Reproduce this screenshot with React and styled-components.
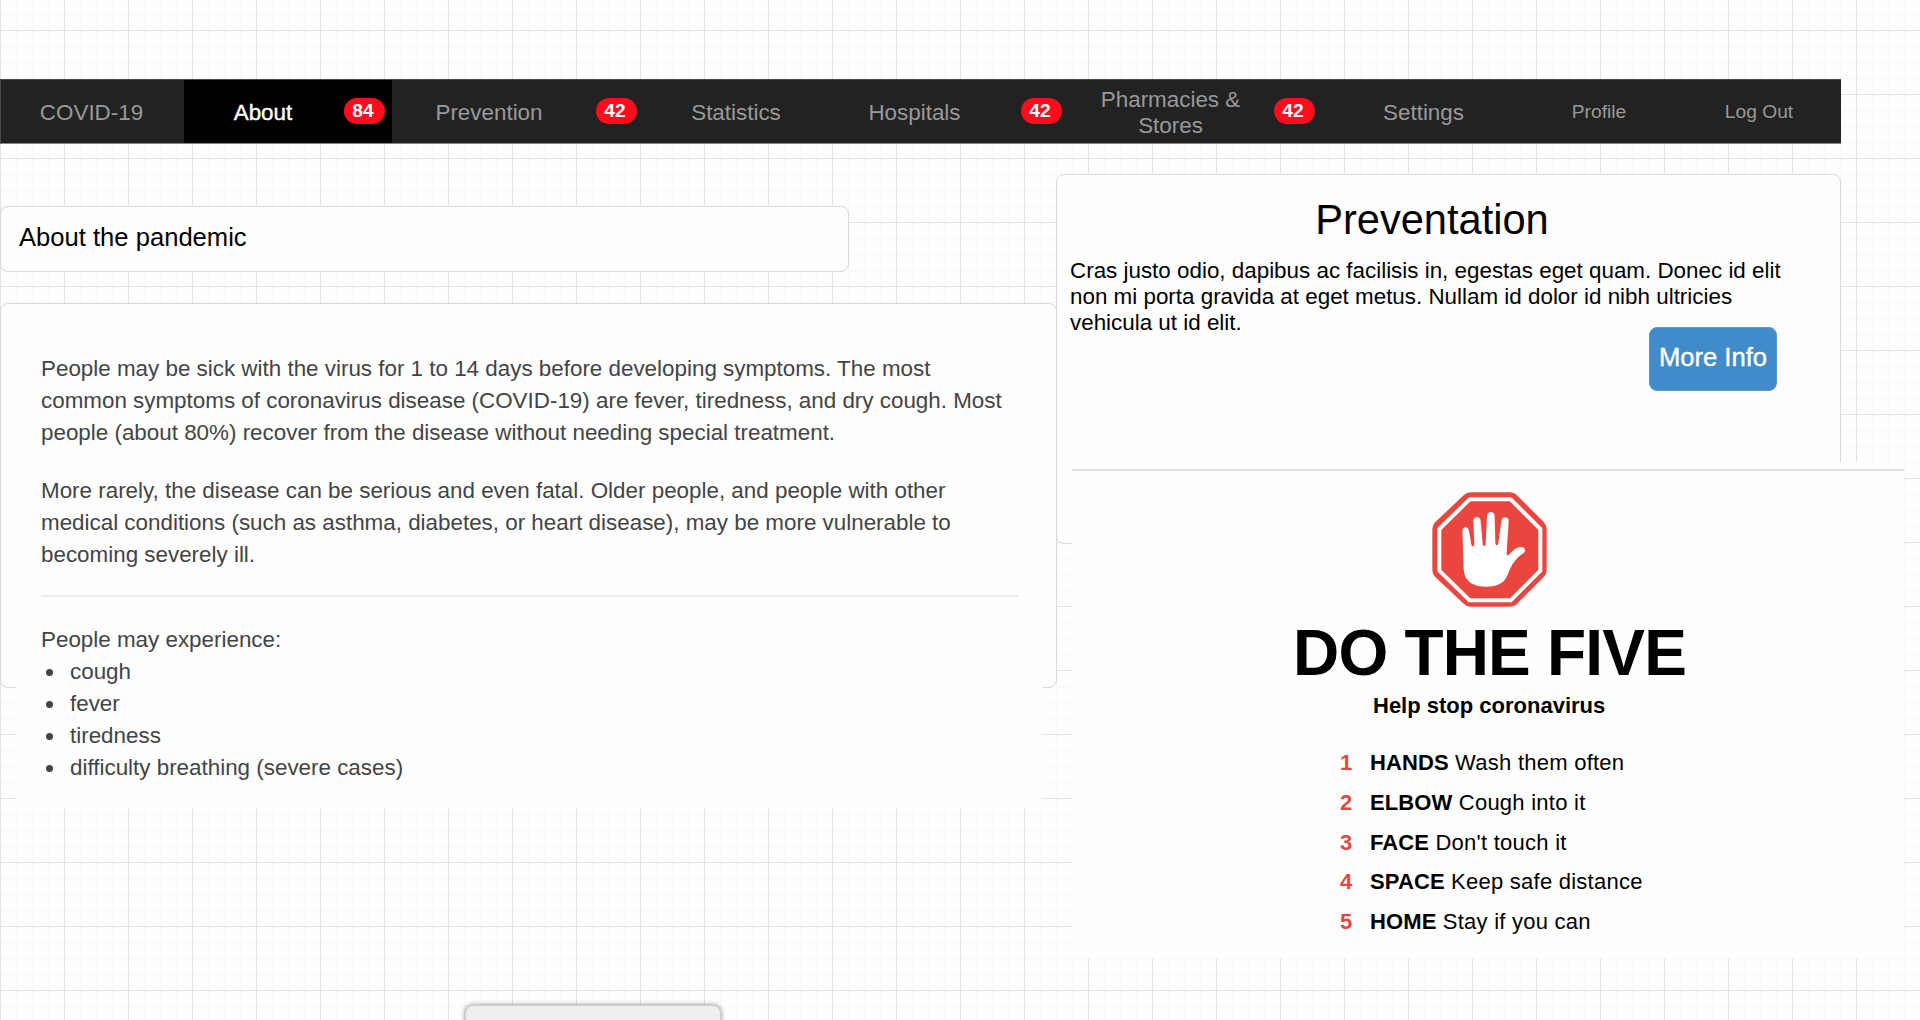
import React from "react";
import styled, { createGlobalStyle } from "styled-components";

const GlobalStyle = createGlobalStyle`
  * { box-sizing: border-box; }
  html, body { margin: 0; padding: 0; }
  body { font-family: "Liberation Sans", Arial, Helvetica, sans-serif; overflow: hidden; }
`;

const Canvas = styled.div`
  width: 1920px;
  height: 1020px;
  overflow: hidden;
  display: flex;
  flex-direction: column;
  padding-top: 79px;
  background-color: #fefefe;
  background-image:
    linear-gradient(to right, #e3e3e3 1px, transparent 1px),
    linear-gradient(to bottom, #e3e3e3 1px, transparent 1px),
    linear-gradient(to right, #f8f8f8 1px, transparent 1px),
    linear-gradient(to bottom, #f8f8f8 1px, transparent 1px);
  background-size: 64px 64px, 64px 64px, 16px 16px, 16px 16px;
  background-position: 0 30px, 0 30px, 0 14px, 0 14px;
`;

const Nav = styled.nav`
  display: flex;
  flex: none;
  width: 1841px;
  height: 65px;
  background: #222;
  border: 1px solid #4a4a4a;
  border-bottom-color: #858585;
  border-right: 0;
`;

const NavItem = styled.a`
  display: flex;
  flex: none;
  align-items: center;
  width: ${(p) => p.$width}px;
  padding-right: ${(p) => (p.$badged ? 8 : 0)}px;
  background: ${(p) => (p.$active ? "#000" : "transparent")};
  color: ${(p) => (p.$active ? "#fff" : "#999")};
  font-size: ${(p) => (p.$small ? 19.2 : 22.4)}px;
  line-height: 26px;
  -webkit-text-stroke: ${(p) => (p.$active ? "0.4px #fff" : "0")};
`;

const NavLabel = styled.span`
  flex: none;
  width: ${(p) => p.$width}px;
  padding: ${(p) => (p.$small ? "0" : "2px 21px 0 19px")};
  text-align: center;
`;

const Badge = styled.span`
  flex: none;
  width: 41px;
  height: 26px;
  margin: 0 0 2px auto;
  border-radius: 13px;
  background: #ff0d1c;
  color: #fff;
  font-size: 19.2px;
  font-weight: 700;
  line-height: 26px;
  padding-right: 3px;
  text-align: center;
  -webkit-text-stroke: 0;
`;

const Columns = styled.main`
  display: flex;
  flex: none;
  align-items: flex-start;
`;

const LeftColumn = styled.section`
  display: flex;
  flex-direction: column;
  width: 1056px;
  padding-top: 62px;
`;

const RightColumn = styled.section`
  display: flex;
  flex-direction: column;
  width: 864px;
  padding-top: 30px;
`;

const Box = styled.div`
  background: #fefefe;
  border: 1.6px solid #d9d9d9;
  border-radius: 8px;
`;

const TitleBox = styled(Box)`
  width: 849px;
  height: 66px;
  padding: 15px 18px;
  font-size: 25.6px;
  line-height: 30px;
  color: #000;
`;

const AboutBox = styled(Box)`
  width: 1057px;
  height: 385px;
  margin-top: 31px;
  padding: 15px 0 0 15px;
`;

const Article = styled.article`
  width: 1027px;
  height: 489px;
  padding: 34px 25px 0;
  background: #fefefe;
  color: #444;
  font-size: 22.4px;
  line-height: 32px;
`;

const Paragraph = styled.p`
  margin: 0 0 26px;
`;

const Divider = styled.hr`
  height: 2px;
  margin: -2px 0 27px;
  border: 0;
  background: #ebebeb;
`;

const Symptoms = styled.ul`
  margin: 0;
  padding: 0;
  list-style: none;
`;

const Symptom = styled.li`
  display: flex;
  align-items: center;
  gap: 17px;
  padding-left: 5px;
  &::before {
    content: "";
    width: 7px;
    height: 7px;
    border-radius: 50%;
    background: #444;
  }
`;

const InfoBox = styled(Box)`
  display: flex;
  flex-direction: column;
  width: 785px;
  height: 370px;
  padding: 21px 63px 0 13px;
  color: #000;
`;

const InfoTitle = styled.h1`
  margin: 0 0 14px;
  padding-left: 17px;
  font-size: 41.6px;
  font-weight: 400;
  line-height: 48px;
  text-align: center;
`;

const InfoText = styled.p`
  width: 730px;
  margin: 0;
  font-size: 22.4px;
  line-height: 26px;
`;

const Button = styled.button`
  align-self: flex-end;
  width: 128px;
  height: 64px;
  margin-top: -9px;
  padding: 0 0 3px;
  border: 1px solid #5598d2;
  border-radius: 8px;
  background: #428bca;
  color: #fff;
  font: 25.6px "Liberation Sans", Arial, sans-serif;
  -webkit-text-stroke: 0.4px #fff;
`;

const Poster = styled.section`
  display: flex;
  flex-direction: column;
  width: 832px;
  height: 496px;
  margin: -82px 0 0 16px;
  padding-top: 7px;
  background: #fefefe;
  color: #000;
  font-size: 22px;
`;

const PosterRule = styled.div`
  height: 2px;
  margin-bottom: 21px;
  background: #dbe0e0;
`;

const SignIcon = styled.svg`
  flex: none;
  width: 115px;
  height: 115px;
  margin-left: 360px;
`;

const PosterTitle = styled.h2`
  margin: 10px 0 0 221px;
  font-size: 64px;
  font-weight: 700;
  letter-spacing: -0.8px;
  line-height: 72px;
  white-space: nowrap;
`;

const PosterSubtitle = styled.h3`
  margin: 1px 0 0 301px;
  font-size: 22px;
  font-weight: 700;
  line-height: 32px;
`;

const Steps = styled.ol`
  display: flex;
  flex-direction: column;
  margin: 21px 0 0 268px;
  padding: 0;
  list-style: none;
`;

const Step = styled.li`
  display: flex;
  height: 39.75px;
  line-height: 39.75px;
`;

const StepNumber = styled.b`
  width: 30px;
  color: #e8463e;
`;

const StepText = styled.span`
  letter-spacing: 0.25px;
  b { letter-spacing: 0.1px; }
`;

const FooterPanel = styled.div`
  flex: none;
  width: 256px;
  height: 64px;
  margin: 47px 0 0 465px;
  border: 1px solid #d0d0d0;
  border-radius: 8px;
  background: #eee;
  box-shadow: 0 0 5px rgba(0, 0, 0, 0.45);
`;

const navItems = [
  { label: "COVID-19", width: 183 },
  { label: "About", width: 208, labelWidth: 160, badge: 84, active: true },
  { label: "Prevention", width: 253, labelWidth: 196, badge: 42 },
  { label: "Statistics", width: 184 },
  { label: "Hospitals", width: 241, labelWidth: 173, badge: 42 },
  { label: "Pharmacies & Stores", width: 253, labelWidth: 203, badge: 42 },
  { label: "Settings", width: 203 },
  { label: "Profile", width: 146, small: true },
  { label: "Log Out", width: 169, labelWidth: 174, small: true },
];

const symptoms = ["cough", "fever", "tiredness", "difficulty breathing (severe cases)"];

const steps = [
  ["HANDS", "Wash them often"],
  ["ELBOW", "Cough into it"],
  ["FACE", "Don't touch it"],
  ["SPACE", "Keep safe distance"],
  ["HOME", "Stay if you can"],
];

function StopSign() {
  return (
    <SignIcon viewBox="96 156 345 345">
      <path
        fill="#e8463e"
        d="M212 157H330Q342 157 351 166L431 246Q440 255 440 267V390Q440 402 431 411L351 491Q342 500 330 500H212Q200 500 191 491L106 411Q97 402 97 390V267Q97 255 106 246L191 166Q200 157 212 157Z"
      />
      <path
        fill="none"
        stroke="#fff"
        strokeWidth="12"
        strokeLinejoin="round"
        d="M209 178H332L421 267V392L332 481H209L118 392V267Z"
      />
      <path
        fill="#fff"
        d="M187 274C187 258 204 258 207 272L214 313C215 321 223 321 223 312L220 243C220 227 241 227 242 243L248 311C249 320 257 320 257 311L261 228C261 212 284 212 284 228L286 309C287 318 294 318 295 309L304 243C306 227 327 228 326 244L320 338C320 347 324 348 329 342C339 331 350 321 363 321C377 321 378 334 370 340C352 351 339 367 331 385C319 414 314 440 258 440C211 440 192 418 191 384Z"
      />
    </SignIcon>
  );
}

export default function App() {
  return (
    <>
      <GlobalStyle />
      <Canvas>
        <Nav>
          {navItems.map((item) => (
            <NavItem
              key={item.label}
              $width={item.width}
              $active={item.active}
              $small={item.small}
              $badged={Boolean(item.badge)}
            >
              <NavLabel $width={item.labelWidth || item.width} $small={item.small}>
                {item.label}
              </NavLabel>
              {item.badge && <Badge>{item.badge}</Badge>}
            </NavItem>
          ))}
        </Nav>
        <Columns>
          <LeftColumn>
            <TitleBox>About the pandemic</TitleBox>
            <AboutBox>
              <Article>
                <Paragraph>
                  People may be sick with the virus for 1 to 14 days before developing symptoms. The
                  most common symptoms of coronavirus disease (COVID-19) are fever, tiredness, and
                  dry cough. Most people (about 80%) recover from the disease without needing
                  special treatment.
                </Paragraph>
                <Paragraph>
                  More rarely, the disease can be serious and even fatal. Older people, and people
                  with other medical conditions (such as asthma, diabetes, or heart disease), may be
                  more vulnerable to becoming severely ill.
                </Paragraph>
                <Divider />
                <div>People may experience:</div>
                <Symptoms>
                  {symptoms.map((s) => (
                    <Symptom key={s}>{s}</Symptom>
                  ))}
                </Symptoms>
              </Article>
            </AboutBox>
          </LeftColumn>
          <RightColumn>
            <InfoBox>
              <InfoTitle>Preventation</InfoTitle>
              <InfoText>
                Cras justo odio, dapibus ac facilisis in, egestas eget quam. Donec id elit non mi
                porta gravida at eget metus. Nullam id dolor id nibh ultricies vehicula ut id elit.
              </InfoText>
              <Button>More Info</Button>
            </InfoBox>
            <Poster>
              <PosterRule />
              <StopSign />
              <PosterTitle>DO THE FIVE</PosterTitle>
              <PosterSubtitle>Help stop coronavirus</PosterSubtitle>
              <Steps>
                {steps.map(([name, text], i) => (
                  <Step key={name}>
                    <StepNumber>{i + 1}</StepNumber>
                    <StepText>
                      <b>{name}</b> {text}
                    </StepText>
                  </Step>
                ))}
              </Steps>
            </Poster>
          </RightColumn>
        </Columns>
        <FooterPanel />
      </Canvas>
    </>
  );
}
